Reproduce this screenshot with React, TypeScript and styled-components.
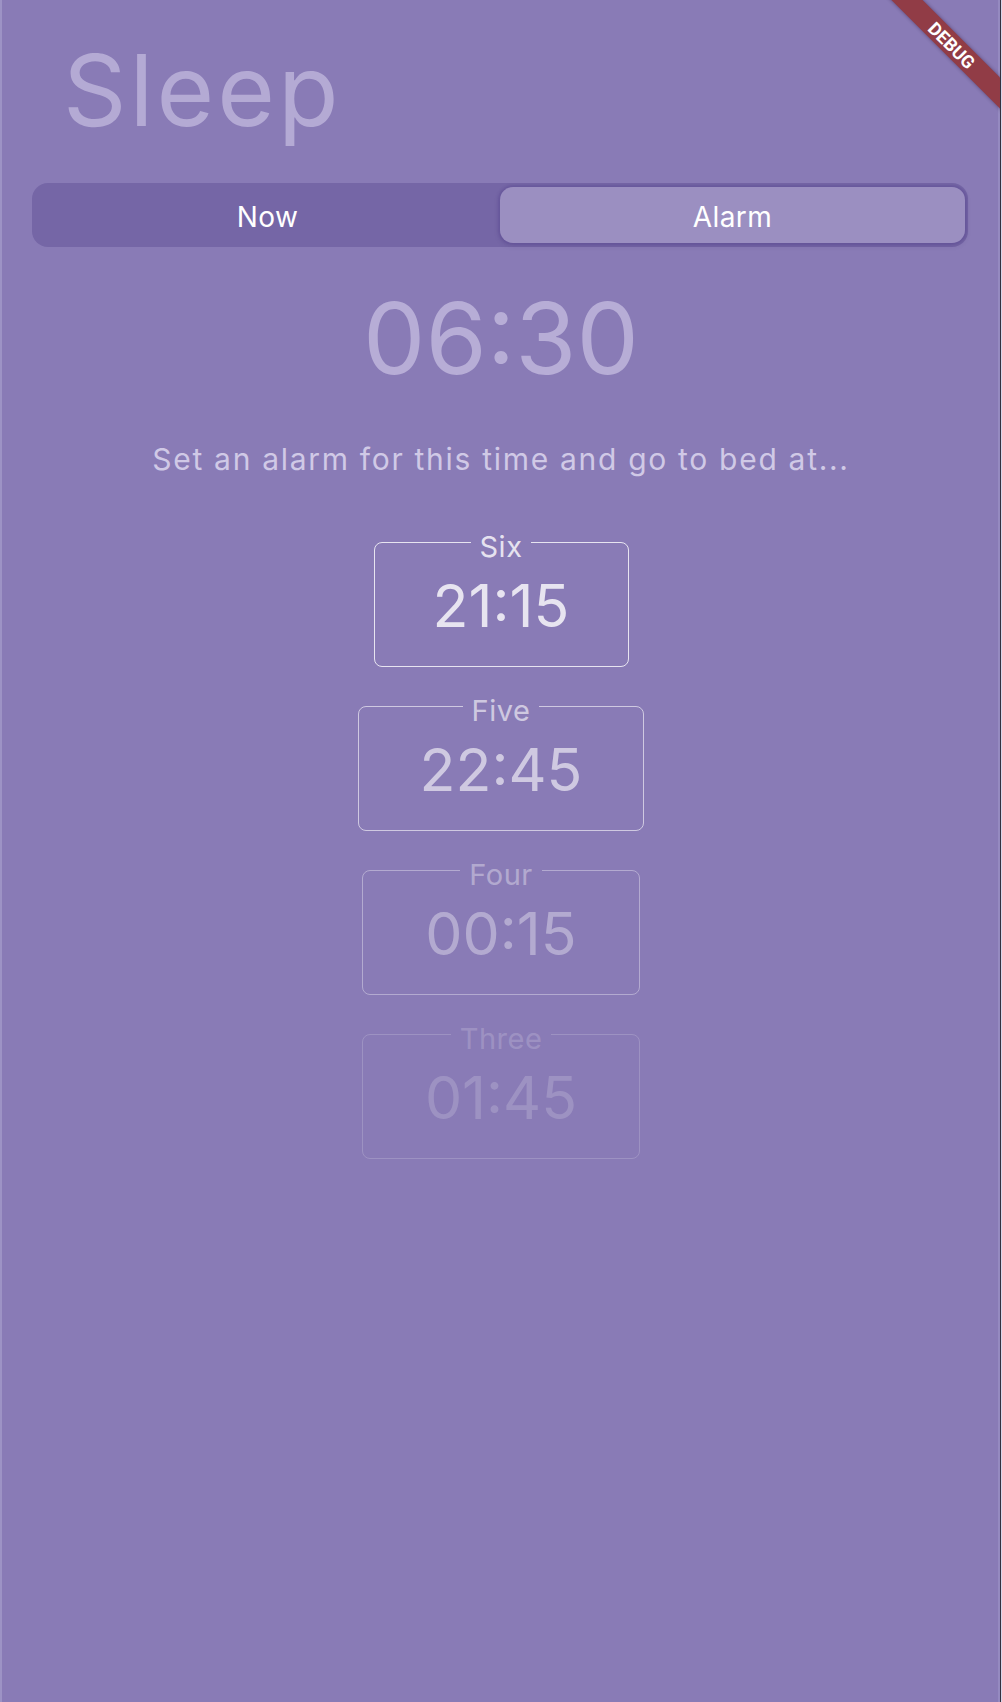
import React from "react";
import styled, { createGlobalStyle } from "styled-components";

const Global = createGlobalStyle`
  html, body {
    margin: 0;
    padding: 0;
    background: #d9d5ea;
  }
  body {
    font-family: "Inter", "Open Sans", sans-serif;
  }
  * { box-sizing: border-box; }
`;

const Screen = styled.div`
  position: relative;
  overflow: hidden;
  width: 1001px;
  min-height: 1702px;
  background: #897bb6;
  border-left: 2px solid #9d93c5;
  border-right: 1px solid #34303f;
  box-shadow: inset -2px 0 0 #958ac0;
  display: flex;
  flex-direction: column;
  align-items: stretch;
  font-family: "Inter", "Open Sans", sans-serif;
  font-weight: 400;
`;

const Title = styled.h1`
  margin: 41px 0 0 61px;
  font-weight: 400;
  font-size: 99px;
  line-height: 1;
  letter-spacing: 3px;
  color: #b4aad4;
`;

const Segmented = styled.div`
  margin: 43px 32px 0 30px;
  height: 64px;
  padding: 4px 3px;
  border-radius: 16px;
  background: #7566a6;
  display: grid;
  grid-template-columns: 1fr 1fr;
`;

const Segment = styled.button<{ $active?: boolean }>`
  border: none;
  margin: 0;
  padding: 4px 0 0;
  font-family: inherit;
  font-size: 28px;
  font-weight: 400;
  letter-spacing: 0.4px;
  color: #ffffff;
  border-radius: 13px;
  background: ${(p) => (p.$active ? "#9b8fc1" : "transparent")};
  box-shadow: ${(p) =>
    p.$active ? "0 0 2px 2px rgba(95, 78, 150, 0.45), 0 2px 6px rgba(40, 20, 80, 0.15)" : "none"};
  display: flex;
  align-items: center;
  justify-content: center;
`;

const BigTime = styled.div`
  margin-top: 42px;
  text-align: center;
  font-size: 99px;
  line-height: 1;
  color: #b7add6;
`;

const Subtitle = styled.p`
  margin: 56px 0 0;
  text-align: center;
  font-size: 30px;
  line-height: 1;
  letter-spacing: 1.7px;
  color: #d0c9e6;
`;

const Cards = styled.div`
  margin-top: 49px;
  display: flex;
  flex-direction: column;
  align-items: center;
  gap: 20px;
`;

const Card = styled.fieldset<{ $width: number; $fade: number }>`
  width: ${(p) => p.$width}px;
  margin: 0;
  padding: 15px 0 31px;
  border: 1px solid rgba(255, 255, 255, 0.8);
  border-radius: 8px;
  opacity: ${(p) => p.$fade};
  color: rgba(255, 255, 255, 0.8);
  text-align: center;
`;

const Label = styled.legend`
  margin: 0 auto;
  padding: 9px 9px 0;
  font-size: 29px;
  line-height: 1;
  letter-spacing: 0.5px;
`;

const Time = styled.div`
  font-size: 59px;
  line-height: 1;
`;

const Banner = styled.div`
  position: absolute;
  left: 864px;
  top: 34px;
  width: 172px;
  height: 22px;
  transform: rotate(45deg);
  background: #913c46;
  box-shadow: 0 0 4px rgba(30, 10, 40, 0.45);
  color: #ffffff;
  font-family: "Roboto", "Liberation Sans", sans-serif;
  font-weight: 700;
  font-size: 18px;
  display: flex;
  align-items: center;
  justify-content: center;
`;

const options = [
  { label: "Six", time: "21:15", width: 255, fade: 1 },
  { label: "Five", time: "22:45", width: 286, fade: 0.75 },
  { label: "Four", time: "00:15", width: 278, fade: 0.45 },
  { label: "Three", time: "01:45", width: 278, fade: 0.22 },
];

export default function App() {
  return (
    <>
      <Global />
      <Screen>
        <Title>Sleep</Title>
        <Segmented>
          <Segment>Now</Segment>
          <Segment $active>Alarm</Segment>
        </Segmented>
        <BigTime>06:30</BigTime>
        <Subtitle>Set an alarm for this time and go to bed at...</Subtitle>
        <Cards>
          {options.map((o) => (
            <Card key={o.label} $width={o.width} $fade={o.fade}>
              <Label>{o.label}</Label>
              <Time>{o.time}</Time>
            </Card>
          ))}
        </Cards>
        <Banner>DEBUG</Banner>
      </Screen>
    </>
  );
}
